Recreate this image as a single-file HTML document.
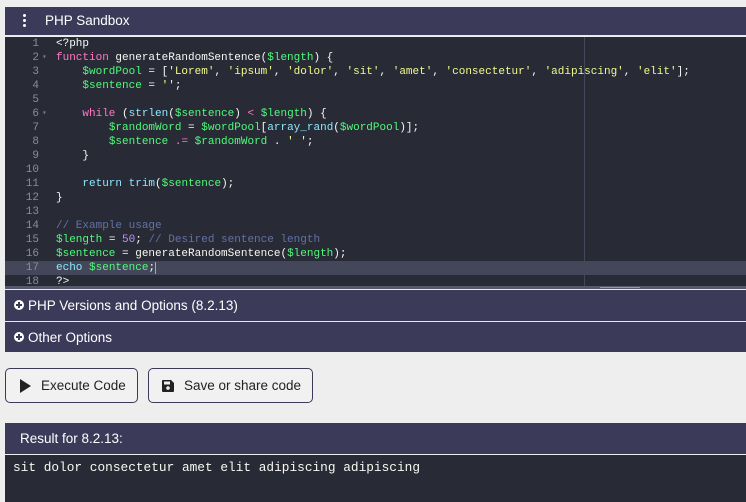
<!DOCTYPE html>
<html><head><style>
*{margin:0;padding:0;box-sizing:border-box}
body{width:746px;height:502px;background:#eeeeee;font-family:"Liberation Sans",Arial,sans-serif;position:relative;overflow:hidden}
.hdr{position:absolute;left:5px;top:7px;right:0;height:28px;background:#3c3a59;color:#fff;font-size:13.5px}
.hdr .t{position:absolute;left:40px;top:6px}
.dots{position:absolute;left:18px;top:7px;width:4px}
.dots i{display:block;width:3px;height:3px;background:#fff;border-radius:50%;margin-bottom:2px}
.wl{position:absolute;left:5px;right:0;height:1px;background:#e8e8f0}
.ed{position:absolute;left:5px;top:37px;right:0;height:249px;background:#282a36;overflow:hidden;font-family:"Liberation Mono","DejaVu Sans Mono",monospace;font-size:11px}
.ln{position:absolute;left:0;height:14px;line-height:14px;width:100%;white-space:pre;color:#f8f8f2}
.ln .n{position:absolute;left:0;width:34px;text-align:right;color:#8a8c96}
.ln .f{position:absolute;left:37px;color:#777;font-size:8px}
.ln .c{position:absolute;left:51px}
.k{color:#ff79c6}.v{color:#50fa7b}.s{color:#f1fa8c}.b{color:#8be9fd}.m{color:#6272a4}.p{color:#bd93f9}
.pm{position:absolute;left:579px;top:0;bottom:0;width:1px;background:#44475a}
.sb{position:absolute;left:5px;right:0;top:286px;height:3px;background:#55576a}
.bar{position:absolute;left:5px;right:0;height:31px;background:#3c3a59;color:#fff;font-size:13.5px}
.bar .pl{position:absolute;left:9px;top:10px;width:10px;height:10px;border-radius:50%;background:#fff}
.bar .pl:before{content:"";position:absolute;left:2px;top:4px;width:6px;height:2px;background:#3c3a59}
.bar .pl:after{content:"";position:absolute;left:4px;top:2px;width:2px;height:6px;background:#3c3a59}
.bar span{position:absolute;left:23px;top:8px}
.btn{position:absolute;top:368px;height:35px;border:1px solid #3c3a59;border-radius:5px;background:#f1f1f1;font-size:13.5px;color:#222}
.btn span{position:absolute;top:9px}
.rh{position:absolute;left:5px;right:0;top:423px;height:31px;background:#3c3a59;color:#fff;font-size:13.5px}
.rh span{position:absolute;left:15px;top:8px}
.rb{position:absolute;left:5px;right:0;top:455px;bottom:0;background:#282a36;color:#f8f8f2;font-family:"Liberation Mono","DejaVu Sans Mono",monospace;font-size:12.8px;padding:5px 0 0 8px}
</style></head><body>
<div class="hdr"><div class="dots"><i></i><i></i><i></i></div><div class="t">PHP Sandbox</div></div>
<div class="wl" style="top:35px"></div>
<div class="ed">
<div class="pm"></div>
<div class="ln" style="top:0"><span class="n">1</span><span class="c">&lt;?php</span></div>
<div class="ln" style="top:14px"><span class="n">2</span><span class="f">▾</span><span class="c"><span class="k">function</span> generateRandomSentence(<span class="v">$length</span>) {</span></div>
<div class="ln" style="top:28px"><span class="n">3</span><span class="c">    <span class="v">$wordPool</span> = [<span class="s">'Lorem'</span>, <span class="s">'ipsum'</span>, <span class="s">'dolor'</span>, <span class="s">'sit'</span>, <span class="s">'amet'</span>, <span class="s">'consectetur'</span>, <span class="s">'adipiscing'</span>, <span class="s">'elit'</span>];</span></div>
<div class="ln" style="top:42px"><span class="n">4</span><span class="c">    <span class="v">$sentence</span> = <span class="s">''</span>;</span></div>
<div class="ln" style="top:56px"><span class="n">5</span></div>
<div class="ln" style="top:70px"><span class="n">6</span><span class="f">▾</span><span class="c">    <span class="k">while</span> (<span class="b">strlen</span>(<span class="v">$sentence</span>) <span class="k">&lt;</span> <span class="v">$length</span>) {</span></div>
<div class="ln" style="top:84px"><span class="n">7</span><span class="c">        <span class="v">$randomWord</span> = <span class="v">$wordPool</span>[<span class="b">array_rand</span>(<span class="v">$wordPool</span>)];</span></div>
<div class="ln" style="top:98px"><span class="n">8</span><span class="c">        <span class="v">$sentence</span> <span class="k">.=</span> <span class="v">$randomWord</span> . <span class="s">' '</span>;</span></div>
<div class="ln" style="top:112px"><span class="n">9</span><span class="c">    }</span></div>
<div class="ln" style="top:126px"><span class="n">10</span></div>
<div class="ln" style="top:140px"><span class="n">11</span><span class="c">    <span class="b">return</span> <span class="b">trim</span>(<span class="v">$sentence</span>);</span></div>
<div class="ln" style="top:154px"><span class="n">12</span><span class="c">}</span></div>
<div class="ln" style="top:168px"><span class="n">13</span></div>
<div class="ln" style="top:182px"><span class="n">14</span><span class="c"><span class="m">// Example usage</span></span></div>
<div class="ln" style="top:196px"><span class="n">15</span><span class="c"><span class="v">$length</span> = <span class="p">50</span>; <span class="m">// Desired sentence length</span></span></div>
<div class="ln" style="top:210px"><span class="n">16</span><span class="c"><span class="v">$sentence</span> = generateRandomSentence(<span class="v">$length</span>);</span></div>
<div class="ln" style="top:224px;background:#44475a"><span class="n">17</span><span class="c"><span class="b">echo</span> <span class="v">$sentence</span>;<span style="border-left:1px solid #aaa"></span></span></div>
<div class="ln" style="top:238px"><span class="n">18</span><span class="c">?&gt;</span></div>
</div>
<div class="sb"><div style="position:absolute;width:40px;top:1px;height:1px;background:#999;left:595px"></div></div>
<div class="wl" style="top:289px"></div>
<div class="bar" style="top:290px"><div class="pl"></div><span>PHP Versions and Options (8.2.13)</span></div>
<div class="wl" style="top:321px"></div>
<div class="bar" style="top:322px;height:30px"><div class="pl"></div><span>Other Options</span></div>
<div class="btn" style="left:5px;width:133px"><svg style="position:absolute;left:13px;top:10px" width="12" height="14" viewBox="0 0 12 14"><path d="M1 0 L12 7 L1 14Z" fill="#222"/></svg><span style="left:35px">Execute Code</span></div>
<div class="btn" style="left:148px;width:165px"><svg style="position:absolute;left:13px;top:11px" width="12" height="12" viewBox="0 0 12 12"><path d="M0 1Q0 0 1 0H9L12 3V11Q12 12 11 12H1Q0 12 0 11Z" fill="#222"/><rect x="2" y="1.5" width="6" height="3" fill="#f1f1f1"/><circle cx="6" cy="8" r="1.8" fill="#f1f1f1"/></svg><span style="left:35px">Save or share code</span></div>
<div class="rh"><span>Result for 8.2.13:</span></div>
<div class="rb">sit dolor consectetur amet elit adipiscing adipiscing</div>
</body></html>
